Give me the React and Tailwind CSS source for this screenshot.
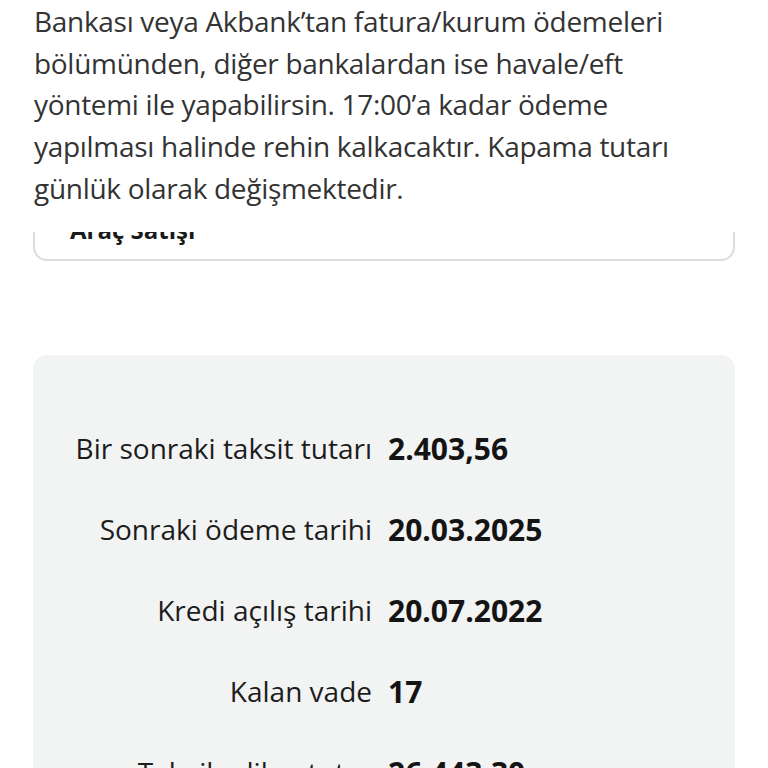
export default function App() {
  const lines = [
    "Bankası veya Akbank’tan fatura/kurum ödemeleri",
    "bölümünden, diğer bankalardan ise havale/eft",
    "yöntemi ile yapabilirsin. 17:00’a kadar ödeme",
    "yapılması halinde rehin kalkacaktır. Kapama tutarı",
    "günlük olarak değişmektedir.",
  ];
  const rows = [
    ["Bir sonraki taksit tutarı", "2.403,56"],
    ["Sonraki ödeme tarihi", "20.03.2025"],
    ["Kredi açılış tarihi", "20.07.2022"],
    ["Kalan vade", "17"],
    ["Tahsil edilen tutar", "26.443,30"],
  ];
  return (
    <div
      className="w-[768px] h-[768px] overflow-hidden bg-white"
      style={{ fontFamily: '"Open Sans", "Noto Sans", sans-serif' }}
    >
      <div className="pt-[1px] pl-[34px] text-[28px] leading-[41.7px] tracking-[-0.3px] text-[#333333]">
        {lines.map((l) => (
          <div key={l} className="whitespace-nowrap">
            {l}
          </div>
        ))}
      </div>

      <div className="mt-[22px] mx-[33px] h-[29px] border-2 border-t-0 border-[#dcdcdc] rounded-b-[14px] overflow-hidden flex flex-col justify-end pb-[17px] pl-[35px]">
        <div className="text-[24px] leading-none font-bold text-[#1a1a1a] whitespace-nowrap">
          Araç Satışı
        </div>
      </div>

      <div className="mt-[94px] mx-[33px] h-[500px] bg-[#f2f3f3] rounded-[14px] pt-[53px]">
        {rows.map(([label, value]) => (
          <div key={label} className="h-[81px] flex items-center">
            <div className="w-[339px] text-right text-[28px] text-[#1c1c1c] whitespace-nowrap">
              {label}
            </div>
            <div className="ml-[16px] text-[30px] font-bold text-[#141414] whitespace-nowrap">
              {value}
            </div>
          </div>
        ))}
      </div>
    </div>
  );
}
